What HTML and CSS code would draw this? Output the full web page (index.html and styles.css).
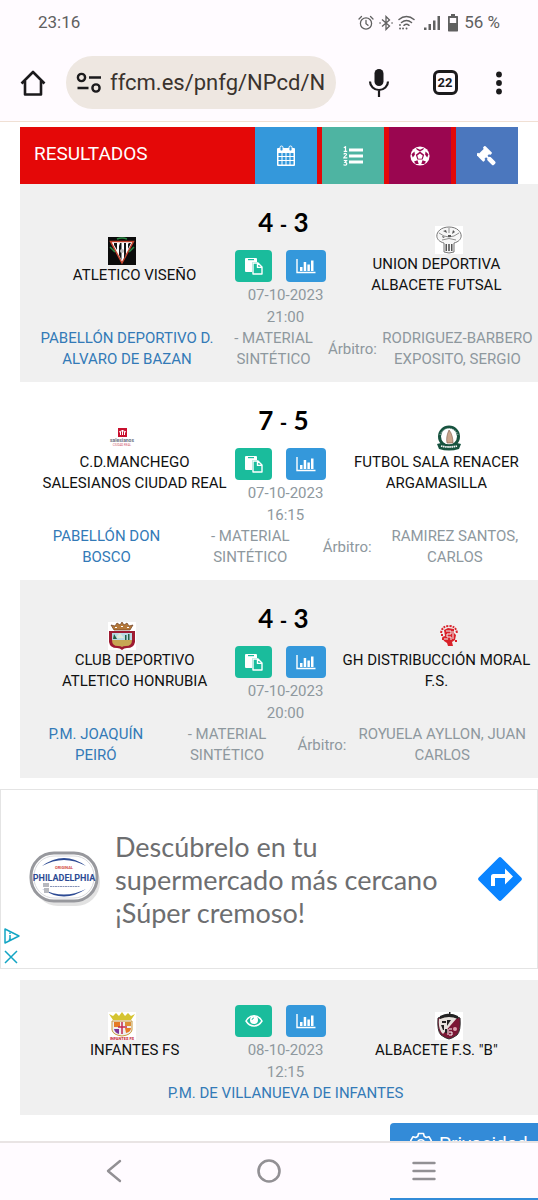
FILE: index.html
```html
<!doctype html>
<html lang="es">
<head>
	<meta charset="UTF-8">
	<meta name="viewport" content="width=device-width, initial-scale=1">
	<title>Resultados</title>
	<link rel="stylesheet" href="styles.css">
</head>
<body>
	<!-- iconos comunes -->
	<svg class="sprite" aria-hidden="true">
		<symbol id="paste" viewBox="0 0 18 18">
			<path fill="#fff" d="M1 1h10a1 1 0 0 1 1 1v3H8.500a1.500 1.500 0 0 0-1.500 1.500V15H1a1 1 0 0 1-1-1V2a1 1 0 0 1 1-1z"/>
			<path fill="#1abc9c" d="M3 2h6v1.200H3z"/>
			<path fill="none" stroke="#fff" stroke-width="1.400" stroke-linejoin="round" d="M8 6h5l4 4v7H8zM12.500 6.200v4.200h4.300"/>
		</symbol>
		<symbol id="chart" viewBox="0 0 20 16">
			<path fill="none" stroke="#fff" stroke-width="1.400" d="M1 1v13.500h18.500"/>
			<path fill="#fff" d="M4 9h2.500v4H4zM7.700 4h2.500v9H7.700zM11.400 6.500h2.500V13h-2.500zM15 2.500h2.500V13H15z"/>
		</symbol>
		<symbol id="eye" viewBox="0 0 18 14">
			<path fill="none" stroke="#fff" stroke-width="1.500" d="M1 7c4-7 12-7 16 0-4 6.500-12 6.500-16 0z"/>
			<circle cx="9" cy="6" r="4" fill="#fff"/>
			<path fill="none" stroke="#1abc9c" stroke-width="0.900" d="M7 6a2 2 0 0 1 2-2"/>
		</symbol>
	</svg>

	<header class="phone-top">
		<div class="status">
			<span>23:16</span>
			<div class="status-icons">
				<svg width="16" height="16" viewBox="0 0 16 16" fill="none" stroke="#606060" stroke-width="1.300" stroke-linecap="round"><circle cx="8" cy="8.500" r="5.600"/><path d="M8 5.500v3.200l2 1.600M1 4l2.500-2.500M15 4l-2.500-2.500"/></svg>
				<svg width="14" height="16" viewBox="0 0 14 16" fill="none" stroke="#606060" stroke-width="1.300"><path d="M3 4.500l7.500 6.500L7 14.500v-13L10.500 5 3 11.500"/><path stroke-linecap="round" stroke-width="1.600" d="M1 8h.1M13 8h.1"/></svg>
				<svg width="17" height="16" viewBox="0 0 17 16" fill="none" stroke="#606060" stroke-width="1.500" stroke-linecap="round"><path d="M1 4.500c4.500-4 10.500-4 15 0M3.500 7.500c3-2.500 7-2.500 10 0M6 10.300c1.500-1.200 3.500-1.200 5 0"/><path stroke-width="1.800" d="M8.500 13.500h.1M2 10v.1M2 13.500h.1M5 13.500h.1"/></svg>
				<svg class="signal" width="16" height="16" viewBox="0 0 16 16" fill="#606060"><path d="M0 12.500h2.500V15H0zM4.500 9H7v6H4.500zM9 5.500h2.500V15H9zM13.500 1H16v14h-2.500z"/></svg>
				<svg class="battery" width="12" height="18" viewBox="0 0 12 18"><path fill="#606060" d="M4 0h4v2h2.500l.5.500V17l-.5.500h-9L1 17V2.500l.5-.5H4z"/><path fill="#fffbff" d="M2.800 4h6.400v5H2.800z"/></svg>
				<span>56 %</span>
			</div>
		</div>
		<div class="toolbar">
			<button class="home" type="button" aria-label="Inicio">
				<svg width="26" height="26" viewBox="0 0 26 26" fill="none" stroke="#1b1a1c" stroke-width="2.600" stroke-linejoin="round"><path d="M1.500 13.500L13 2l11.500 11.500M5 11v13.500h16V11"/></svg>
			</button>
			<div class="address">
				<svg width="26" height="22" viewBox="0 0 26 22" fill="none" stroke="#1b1a1c" stroke-width="2.400"><circle cx="5.500" cy="5.500" r="3.600"/><circle cx="20" cy="16" r="3.600"/><path d="M13 5.500h12M1.500 16h11"/></svg>
				<input type="text" value="ffcm.es/pnfg/NPcd/N" aria-label="Dirección">
			</div>
			<button class="mic" type="button" aria-label="Voz">
				<svg width="22" height="30" viewBox="0 0 22 30"><rect x="6.500" y="1" width="9" height="17" rx="4.500" fill="#1b1a1c"/><path fill="none" stroke="#1b1a1c" stroke-width="2.200" d="M2 13.500a9 8.500 0 0 0 18 0M11 22v7"/></svg>
			</button>
			<button class="tabs" type="button" aria-label="22 pestañas"><span>22</span></button>
			<button class="more" type="button" aria-label="Más">
				<svg width="6" height="24" viewBox="0 0 6 24" fill="#1b1a1c"><circle cx="3" cy="3.500" r="2.900"/><circle cx="3" cy="12" r="2.900"/><circle cx="3" cy="20.500" r="2.900"/></svg>
			</button>
		</div>
	</header>

	<main>
		<div class="heading">
			<h1>RESULTADOS</h1>
			<a href="#" class="tab calendar" aria-label="Calendario">
				<svg width="20" height="22" viewBox="0 0 20 22"><path fill="#fff" d="M2 3h16a1 1 0 0 1 1 1v16a1 1 0 0 1-1 1H2a1 1 0 0 1-1-1V4a1 1 0 0 1 1-1z"/><rect x="4" y="1" width="3" height="5" rx="1.500" fill="#3498db" stroke="#fff"/><rect x="13" y="1" width="3" height="5" rx="1.500" fill="#3498db" stroke="#fff"/><path fill="#3498db" d="M2.500 8h3v3h-3zM6.500 8h3v3h-3zM10.500 8h3v3h-3zM14.500 8h3v3h-3zM2.500 12h3v3h-3zM6.500 12h3v3h-3zM10.500 12h3v3h-3zM14.500 12h3v3h-3zM2.500 16h3v3.500h-3zM6.500 16h3v3.500h-3zM10.500 16h3v3.500h-3zM14.500 16h3v3.500h-3z"/></svg>
			</a>
			<a href="#" class="tab table" aria-label="Clasificación">
				<svg width="20" height="20" viewBox="0 0 20 20"><path fill="#fff" d="M6 2.500h14v3H6zM6 8.500h14v3H6zM6 14.500h14v3H6z"/><path fill="none" stroke="#fff" stroke-width="1.200" d="M.8 1.800L2.500.8V5M.7 5.300h3.500M.7 8.300c1-1.300 3-1 2.800.3 0 1-2.500 1.700-2.700 3.300h3.500M.8 14.500h2.700l-1.500 1.800c2.500 0 2.300 2.900.2 2.900-.8 0-1.300-.2-1.700-.6"/></svg>
			</a>
			<a href="#" class="tab ball" aria-label="Jornada">
				<svg width="20" height="20" viewBox="0 0 20 20"><circle cx="10" cy="10" r="9.600" fill="#fff"/><path fill="#9a0650" d="M10 5.600l4.200 3.100-1.600 4.900H7.400L5.800 8.700zM6 1.800l4 2 4-2-.8 2L10 5.400 6.800 3.800zM1.500 8.200l3-2.700.4 3.300-2.100 2.800zM18.500 8.200l-3-2.700-.4 3.300 2.100 2.800zM4 15.500l3.500-1.200 1.200 3.800-3-.2zM16 15.500l-3.500-1.200-1.200 3.800 3-.2z"/><path fill="#fff" d="M10 7.500l2.700 2-1 3.200H8.300l-1-3.200z"/></svg>
			</a>
			<a href="#" class="tab gavel" aria-label="Sanciones">
				<svg width="20" height="20" viewBox="0 0 20 20"><g fill="#fff" transform="rotate(-45 8 8)"><rect x="3" y="3.500" width="9" height="7.500"/><rect x="1.200" y="2" width="3" height="10.500" rx="1"/><rect x="10.800" y="2" width="3" height="10.500" rx="1"/><rect x="6.500" y="10" width="2" height="4"/><rect x="5.200" y="13" width="4.600" height="9" rx="1.500"/></g></svg>
			</a>
		</div>

		<section class="match gray">
			<div class="top">
				<div class="team local">
					<svg class="crest" viewBox="0 0 28 28"><path fill="#0b0b0b" d="M0 0h28v28H0z"/><path fill="#fff" stroke="#c4432e" stroke-width="1.500" d="M2.500 4.500h23L14 26z"/><path fill="#151515" d="M6 6h3v7L6 8zM12 6h1.500v17L11 18V9zM16 6h2v11l-2 5zM21 6h2l-3 6V7z"/><path fill="none" stroke="#2b8a43" stroke-width="1.500" d="M9 2q5-2 10 0M2 10l5 5M26 10l-5 5"/><circle cx="14" cy="14" r="2" fill="#bbb"/></svg>
					<a href="#">ATLETICO VISEÑO</a>
				</div>
				<div class="info">
					<p class="score">4 <small>-</small> 3</p>
					<div class="actions">
						<button class="acta" type="button" aria-label="Acta"><svg width="18" height="18"><use href="#paste"/></svg></button>
						<button class="stats" type="button" aria-label="Estadísticas"><svg width="20" height="16"><use href="#chart"/></svg></button>
					</div>
					<p class="date">07-10-2023<br>21:00</p>
				</div>
				<div class="team visitor">
					<svg class="crest" viewBox="0 0 28 28"><path fill="#fff" d="M0 0h28v28H0z"/><path fill="#f6f6f6" stroke="#777" d="M9 17C-3 14 1 1 14 1s17 13 5 16v9q-5 2-10 0z"/><path fill="none" stroke="#777" stroke-width=".8" d="M4 7q10 8 20 0M7 14q7-3 14 0M14 2v5"/><path fill="#555" d="M10.500 18h1.500v7h-1.500zM13.200 18h1.600v7h-1.600zM16 18h1.500v7H16zM8 5l3-1 1 3zM18 4l2 2-3 2zM13 9h3v2h-3zM7 10l3 1-2 1z"/></svg>
					<a href="#">UNION DEPORTIVA ALBACETE FUTSAL</a>
				</div>
			</div>
			<table class="place wide">
				<tr>
					<td><a href="#">PABELLÓN DEPORTIVO D. ALVARO DE BAZAN</a></td>
					<td>- MATERIAL SINTÉTICO</td>
					<td>Árbitro:</td>
					<td>RODRIGUEZ-BARBERO EXPOSITO, SERGIO</td>
				</tr>
			</table>
		</section>

		<section class="match">
			<div class="top">
				<div class="team local">
					<svg class="crest" viewBox="0 0 28 28"><path fill="#c8102e" d="M10 4h9v9h-9z"/><path fill="none" stroke="#fff" d="M11 8q3.500-3 7 0M12.500 8v3M14.500 6v5M16.500 8v3"/><text x="14" y="18" font-size="5" font-weight="700" text-anchor="middle" fill="#6b6f80">salesianos</text><text x="14" y="22" font-size="3" text-anchor="middle" fill="#d0566a">CIUDAD REAL</text></svg>
					<a href="#">C.D.MANCHEGO SALESIANOS CIUDAD REAL</a>
				</div>
				<div class="info">
					<p class="score">7 <small>-</small> 5</p>
					<div class="actions">
						<button class="acta" type="button" aria-label="Acta"><svg width="18" height="18"><use href="#paste"/></svg></button>
						<button class="stats" type="button" aria-label="Estadísticas"><svg width="20" height="16"><use href="#chart"/></svg></button>
					</div>
					<p class="date">07-10-2023<br>16:15</p>
				</div>
				<div class="team visitor">
					<svg class="crest" viewBox="0 0 28 28"><circle cx="14" cy="12.500" r="9.500" fill="#fff" stroke="#17533f" stroke-width="3"/><path fill="#c9a58c" stroke="#7d5b49" stroke-width=".6" d="M12 19c-1-4 0-9 2-13 3 3 4 9 4 13z"/><path fill="none" stroke="#fff" stroke-dasharray="1 1" stroke-width=".8" d="M5 11a9.500 9.500 0 0 1 18 0"/><path fill="#17533f" d="M2 20l4-1q8 3 16 0l4 1-2 5q-10 3-20 0z"/><path fill="none" stroke="#fff" stroke-dasharray="1.500 .6" stroke-width="1.800" d="M6 22q8 2 16 0"/></svg>
					<a href="#">FUTBOL SALA RENACER ARGAMASILLA</a>
				</div>
			</div>
			<table class="place">
				<tr>
					<td><a href="#">PABELLÓN DON BOSCO</a></td>
					<td>- MATERIAL SINTÉTICO</td>
					<td>Árbitro:</td>
					<td>RAMIREZ SANTOS, CARLOS</td>
				</tr>
			</table>
		</section>

		<section class="match gray">
			<div class="top">
				<div class="team local">
					<svg class="crest" viewBox="0 0 28 28"><path fill="#fff" d="M0 0h28v28H0z"/><path fill="#b5793a" stroke="#6f3f22" stroke-width=".7" d="M6 8L3 3l4 1 2-3 3 2 2-3 2 3 3-2 2 3 4-1-3 5z"/><path fill="#fff" d="M7 5h2v1H7zM13 4h2v1h-2zM19 5h2v1h-2z"/><path fill="#9e1b32" d="M1 9h26v11q-1 6-8 6-3 0-5 2-2-2-5-2-7 0-8-6z"/><path fill="#b9d9e4" d="M4 11h20v7H4z"/><path fill="#dce9d8" d="M9 14l3-3 4 5H9z"/><path fill="#235f43" d="M6 12l3 5H5zM17 13h1.500v5H17zM20 12h1.500v6H20z"/><path fill="#c7a754" d="M4 18h20q0 6-6 6-3 0-4 1-1-1-4-1-6 0-6-6z"/></svg>
					<a href="#">CLUB DEPORTIVO ATLETICO HONRUBIA</a>
				</div>
				<div class="info">
					<p class="score">4 <small>-</small> 3</p>
					<div class="actions">
						<button class="acta" type="button" aria-label="Acta"><svg width="18" height="18"><use href="#paste"/></svg></button>
						<button class="stats" type="button" aria-label="Estadísticas"><svg width="20" height="16"><use href="#chart"/></svg></button>
					</div>
					<p class="date">07-10-2023<br>20:00</p>
				</div>
				<div class="team visitor">
					<svg class="crest" viewBox="0 0 28 28"><path fill="none" stroke="#d9222a" stroke-width="2" stroke-dasharray="2 1" d="M6 11q1-7 8-7 7 0 8 7"/><path fill="#d9222a" d="M9 8l4-2 6 1v4l2 2-1 5-3 2 1 4h-5l-1-3-3-2-2-4 3-1z"/><path fill="none" stroke="#f0f0f0" d="M11 9h5v3h-4v3h4v3M18 9v8M9 17h4"/><path fill="#d9222a" d="M6 12h2v2H6zM7 16h2v2H7zM20 18h2v2h-2z"/></svg>
					<a href="#">GH DISTRIBUCCIÓN MORAL F.S.</a>
				</div>
			</div>
			<table class="place">
				<tr>
					<td><a href="#">P.M. JOAQUÍN PEIRÓ</a></td>
					<td>- MATERIAL SINTÉTICO</td>
					<td>Árbitro:</td>
					<td>ROYUELA AYLLON, JUAN CARLOS</td>
				</tr>
			</table>
		</section>

		<aside class="ad">
			<svg width="76" height="58" viewBox="0 0 76 58">
				<rect x="7" y="8" width="66" height="48" rx="24" fill="#e2e2e2"/>
				<rect x="4" y="3" width="66" height="48" rx="23" fill="#fff" stroke="#97989d" stroke-width="3"/>
				<rect x="7" y="6" width="60" height="42" rx="20" fill="#fff" stroke="#d9dade"/>
				<path fill="#2d4b94" d="M15 16Q37 0 59 16 37 4 15 16zM15 39q22 15 44 0-22 11-44 0z"/>
				<text x="37" y="19" class="brand-top">ORIGINAL</text>
				<text x="37" y="31" class="brand">PHILADELPHIA</text>
				<path stroke="#8794b8" stroke-dasharray="2 .5" d="M23 36.500h30"/>
				<path fill="#b7b9bf" d="M16 33h6v4h-6zM17 38h5v5h-5z"/>
			</svg>
			<p>Descúbrelo en tu supermercado más cercano ¡Súper cremoso!</p>
			<a href="#" class="go" aria-label="Cómo llegar">
				<svg width="46" height="46" viewBox="0 0 46 46"><rect x="7" y="7" width="32" height="32" rx="2" fill="#0a84ff" transform="rotate(45 23 23)"/><path fill="#fff" d="M14 30V20.500q0-2.500 2.500-2.500H28v-5.500l8 8-8 8V22H18v8z"/></svg>
			</a>
			<div class="ad-marks">
				<a href="#" aria-label="Información del anuncio"><svg width="16" height="16" viewBox="0 0 16 16" fill="none" stroke="#13a5c4" stroke-width="1.500" stroke-linejoin="round"><path d="M1 1v14l14-7z"/><path d="M6 7v5M6 4.500V6M4.800 11.500h2.400"/></svg></a>
				<button type="button" aria-label="Cerrar anuncio"><svg width="14" height="14" viewBox="0 0 14 14" stroke="#13a5c4" stroke-width="1.500"><path d="M1 1l12 12M13 1L1 13"/></svg></button>
			</div>
		</aside>

		<section class="match gray next">
			<div class="top">
				<div class="team local">
					<svg class="crest" viewBox="0 0 28 28"><path fill="#fff" d="M0 0h28v28H0z"/><path fill="#d5c431" d="M5 8L1 2l4 2 3-3 3 3 3-4 3 4 3-3 3 3 4-2-4 6z"/><path fill="#eee" stroke="#c99a3e" d="M4 9h20v9q-1 5-10 6Q5 23 4 18z"/><path fill="#e67a25" d="M6 10h6v5H6zM17 16h6q0 4-5 5z"/><path fill="#7f3699" d="M6 17h5v5q-4-1-5-5z"/><path fill="#de8f33" d="M17 10h6v4h-6z"/><path stroke="#c52a50" stroke-width="1.500" d="M14 10v12M10 15h9"/><text x="14" y="28" font-size="4" font-weight="700" text-anchor="middle" fill="#c4202d">INFANTES FS</text></svg>
					<a href="#">INFANTES FS</a>
				</div>
				<div class="info">
					<div class="actions">
						<button class="acta" type="button" aria-label="Ver partido"><svg width="18" height="14"><use href="#eye"/></svg></button>
						<button class="stats" type="button" aria-label="Estadísticas"><svg width="20" height="16"><use href="#chart"/></svg></button>
					</div>
					<p class="date">08-10-2023<br>12:15</p>
				</div>
				<div class="team visitor">
					<svg class="crest" viewBox="0 0 28 28"><path fill="#fff" d="M0 0h28v28H0z"/><path fill="#7b1735" stroke="#333" d="M3 6q11-6 22 0 1 13-3 17-4 3-8 4-4-1-8-4Q2 19 3 6z"/><path fill="#e7e2dd" d="M4 7q9-5 18-1L8 22q-5-4-4-15z"/><path fill="#222" d="M5 4q9-5 18 0v3q-9-4-18 0zM14 0h1.500v5H14zM7 9h4v2H7zM6 13h3v5H8zM12 8h4l-4 6zM10 17h2v4h-2z"/><path stroke="#fff" d="M13 17v6M14 17h3M14 20h3v3h-3" fill="none"/><circle cx="20" cy="17" r="2" fill="#dba2af"/></svg>
					<a href="#">ALBACETE F.S. "B"</a>
				</div>
			</div>
			<table class="place">
				<tr>
					<td><a href="#">P.M. DE VILLANUEVA DE INFANTES</a></td>
				</tr>
			</table>
		</section>
	</main>

	<button class="privacy" type="button">
		<svg width="22" height="22" viewBox="0 0 22 22" fill="none" stroke="#fff" stroke-width="1.600" stroke-linejoin="round"><path d="M8.500 1.500h5l.7 2.800 2 1.200 2.800-.8 2.300 4-2 2v1.600l2 2-2.300 4-2.800-.8-2 1.200-.7 2.800h-5l-.7-2.800-2-1.200-2.800.8-2.300-4 2-2v-1.600l-2-2 2.300-4 2.800.8 2-1.200z"/><circle cx="11" cy="11.500" r="3.800"/></svg>
		Privacidad
	</button>

	<nav class="phone-nav">
		<div class="keys">
			<button type="button" aria-label="Atrás"><svg width="24" height="24" viewBox="0 0 24 24" fill="none" stroke="#929094" stroke-width="2.400" stroke-linecap="round" stroke-linejoin="round"><path d="M18 2L6 12l12 10"/></svg></button>
			<button type="button" aria-label="Inicio"><svg width="24" height="24" viewBox="0 0 24 24" fill="none" stroke="#929094" stroke-width="2.600"><circle cx="12" cy="12" r="10.500"/></svg></button>
			<button type="button" aria-label="Recientes"><svg width="24" height="24" viewBox="0 0 24 24" stroke="#929094" stroke-width="2.400" stroke-linecap="round"><path d="M1.500 4h21M1.500 12h21M1.500 20h21"/></svg></button>
		</div>
		<div class="edge"></div>
	</nav>
</body>
</html>
```
FILE: styles.css
```css
*{
	box-sizing: border-box;
	padding: 0;
	margin: 0;
}
body{
	font: 15px/21px Roboto, "Liberation Sans", sans-serif;
	color: #111;
	background: #fff;
	overflow-x: hidden;
}
a{
	color: inherit;
	text-decoration: none;
}
button{
	border: 0;
	background: none;
	font: inherit;
	cursor: pointer;
}
svg{
	display: block;
	flex: none;
}
.sprite{
	display: none;
}

/* barra del telefono */
.phone-top{
	background: #fffbff;
	border-bottom: 1px solid #f0e0d4;
}
.status{
	display: flex;
	justify-content: space-between;
	align-items: center;
	height: 45px;
	padding: 0 38px;
	font-size: 17px;
	color: #606060;
}
.status-icons{
	display: flex;
	align-items: center;
	gap: 5px;
}
.signal{
	margin: 0 2px 0 4px;
}
.toolbar{
	display: flex;
	align-items: center;
	padding: 11px 24px 12px 20px;
}
.address{
	flex: 1;
	display: flex;
	align-items: center;
	gap: 8px;
	min-width: 0;
	height: 53px;
	margin: 0 16px 0 20px;
	padding: 0 10px;
	border-radius: 27px;
	background: #eee7e1;
}
.address input{
	flex: 1;
	min-width: 0;
	border: 0;
	outline: 0;
	background: none;
	font: 22px/30px Roboto, sans-serif;
	color: #3a332e;
}
.mic, .tabs, .more{
	display: flex;
	justify-content: center;
	align-items: center;
}
.mic{
	width: 54px;
}
.tabs{
	width: 78px;
}
.tabs span{
	width: 25px;
	height: 25px;
	border: 3px solid #1b1a1c;
	border-radius: 6px;
	font-size: 13px;
	line-height: 20px;
	font-weight: 700;
	color: #1b1a1c;
}
.more{
	width: 30px;
}

/* cabecera */
.heading{
	display: flex;
	gap: 5px;
	height: 57px;
	margin: 5px 20px 0;
	background: #e40808;
}
.heading h1{
	flex: 1;
	margin-right: -5px;
	padding-left: 14px;
	font-size: 19px;
	line-height: 54px;
	font-weight: 400;
	color: #fff;
}
.tab{
	display: flex;
	justify-content: center;
	align-items: center;
	width: 62px;
}
.calendar{
	background: #3498db;
}
.table{
	background: #4eb4a2;
}
.ball{
	background: #9a0650;
}
.gavel{
	background: #4b77be;
}

/* partidos */
.match{
	margin-left: 20px;
	padding: 20px 1px 12px 14px;
}
.gray{
	background: #f0f0f0;
}
.top{
	display: grid;
	grid-template-columns: 2fr 1fr 2fr;
}
.team{
	display: flex;
	flex-direction: column;
	justify-content: center;
	align-items: center;
	padding: 0 6px 10px;
	text-align: center;
}
.crest{
	width: 28px;
	height: 28px;
}
.local .crest{
	margin-right: 26px;
}
.visitor .crest{
	margin-left: 26px;
}
.info{
	display: flex;
	flex-direction: column;
}
.score{
	margin-bottom: 10px;
	padding-right: 4px;
	font: 700 26px/36px Lato, sans-serif;
	text-align: center;
	color: #000;
}
.score small{
	font-size: 20px;
	line-height: 1;
}
.actions{
	display: flex;
	gap: 14px;
}
.actions button{
	display: flex;
	justify-content: center;
	align-items: center;
	width: 40px;
	height: 32px;
	border-radius: 4px;
}
.actions .acta{
	width: 37px;
	background: #1abc9c;
}
.actions .stats{
	background: #3498db;
}
.date{
	margin-top: 2px;
	line-height: 22px;
	text-align: center;
	color: #8e989e;
}
.place{
	width: 100%;
	border-collapse: collapse;
	color: #8e989e;
}
.place td{
	padding: 0 1px;
	text-align: center;
}
.wide td:first-child{
	width: 37%;
}
.place a{
	color: #337ab7;
}
.next{
	padding-top: 25px;
	padding-bottom: 11px;
}
.next .team{
	padding-bottom: 16px;
}

/* anuncio */
.ad{
	position: relative;
	display: flex;
	align-items: center;
	min-height: 180px;
	margin: 11px 0;
	padding: 0 14px 0 26px;
	border: 1px solid #e4e4e4;
}
.ad p{
	flex: 1;
	padding: 0 30px 0 12px;
	font: 27px/33px Lato, sans-serif;
	color: #6d6e70;
}
.brand{
	font: 700 9px Roboto, sans-serif;
	text-anchor: middle;
	fill: #2d4b94;
}
.brand-top{
	font: 700 4px Roboto, sans-serif;
	text-anchor: middle;
	fill: #d24a43;
}
.ad-marks{
	position: absolute;
	left: 3px;
	bottom: 4px;
	display: grid;
	gap: 6px;
}

/* boton flotante, queda en parte bajo la barra */
.privacy{
	position: fixed;
	right: 0;
	bottom: 37px;
	display: flex;
	align-items: center;
	gap: 7px;
	width: 148px;
	height: 40px;
	padding-left: 20px;
	border-radius: 4px 0 0 4px;
	background: #338bd8;
	font-size: 19px;
	color: #fff;
}
.phone-nav{
	position: fixed;
	left: 0;
	right: 0;
	bottom: 0;
	background: #fffbff;
	border-top: 2px solid #e9e4e4;
}
.keys{
	display: grid;
	grid-template-columns: repeat(3, 1fr);
	padding: 16px 36px 15px;
}
.keys button{
	display: flex;
	justify-content: center;
}
.edge{
	width: 148px;
	height: 2px;
	margin-left: auto;
	background: #338bd8;
}
```
